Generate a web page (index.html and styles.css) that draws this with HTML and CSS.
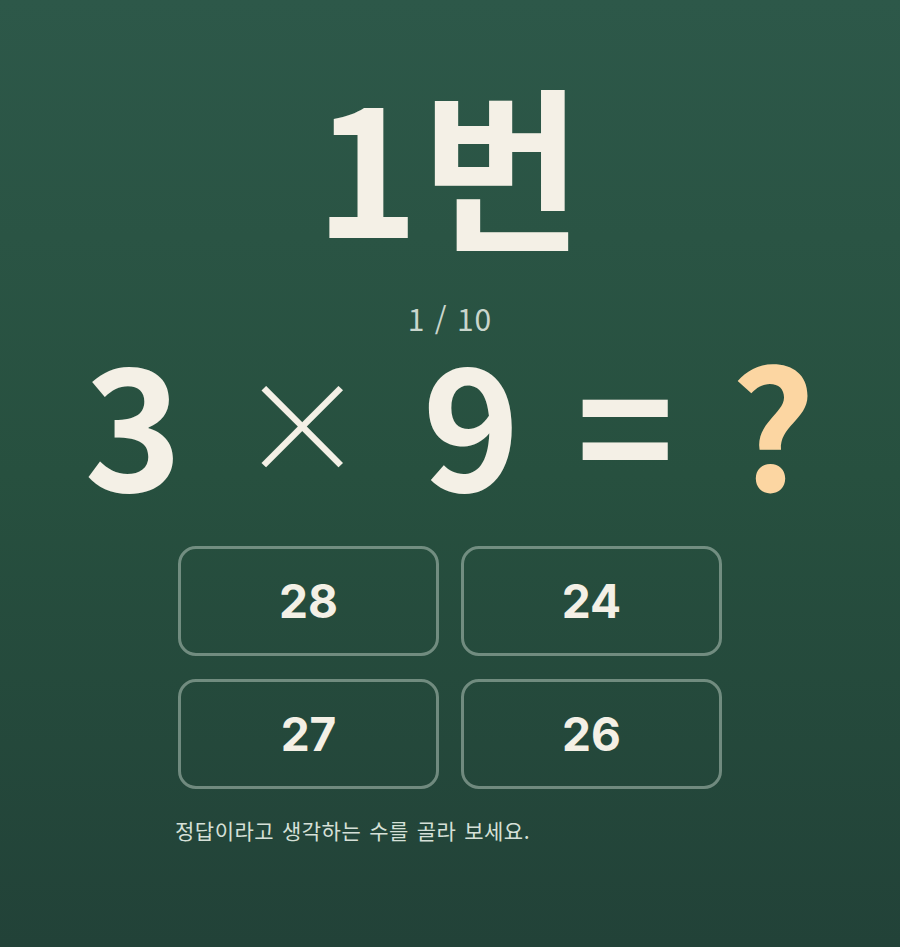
FILE: index.html
```html
<!DOCTYPE html>
<html lang="ko">
<head>
<meta charset="utf-8">
<link rel="stylesheet" href="styles.css">
</head>
<body>
<main class="quiz">
  <h1 class="title">1번</h1>
  <div class="progress">1 / 10</div>
  <div class="equation">
    <span class="num">3</span>
    <span class="op times">×</span>
    <span class="num">9</span>
    <span class="op eq">=</span>
    <span class="q">?</span>
  </div>
  <div class="choices">
    <button class="choice">28</button>
    <button class="choice">24</button>
    <button class="choice">27</button>
    <button class="choice">26</button>
  </div>
  <p class="hint">정답이라고 생각하는 수를 골라 보세요.</p>
</main>
</body>
</html>
```
FILE: styles.css
```css
html, body {
  margin: 0;
  padding: 0;
}
body {
  width: 900px;
  height: 947px;
  overflow: hidden;
  background: linear-gradient(180deg, #2d5849 0%, #27503f 50%, #224238 100%);
  font-family: "Noto Sans CJK KR", "Noto Sans", sans-serif;
  color: #f4f0e6;
}
.quiz {
  display: flex;
  flex-direction: column;
  align-items: center;
  padding-top: 74px;
}
.title {
  margin: 0;
  font-size: 176px;
  line-height: 1;
  font-weight: 700;
  letter-spacing: 2px;
}
.progress {
  margin-top: 53px;
  font-size: 30px;
  line-height: 1;
  color: #c9d6cd;
  letter-spacing: 1px;
}
.equation {
  display: flex;
  align-items: center;
  justify-content: center;
  gap: 56px;
  margin-top: 7px;
  height: 160px;
  font-size: 166px;
  line-height: 1;
  font-weight: 700;
}
.op.times {
  font-weight: 300;
  font-size: 128px;
}
.q {
  color: #fcd6a2;
}
.choices {
  display: grid;
  grid-template-columns: 261px 261px;
  grid-auto-rows: 110px;
  gap: 23px 22px;
  margin-top: 46px;
}
.choice {
  box-sizing: border-box;
  background: transparent;
  border: 3px solid rgba(220, 232, 222, 0.42);
  border-radius: 18px;
  font-family: "Inter", "Noto Sans", sans-serif;
  font-size: 46px;
  font-weight: 700;
  color: #f4f0e6;
  cursor: pointer;
}
.hint {
  align-self: flex-start;
  margin: 26px 0 0 175px;
  font-size: 21px;
  letter-spacing: 0.5px;
  word-spacing: 1.5px;
  color: #d6e0d8;
}
```
